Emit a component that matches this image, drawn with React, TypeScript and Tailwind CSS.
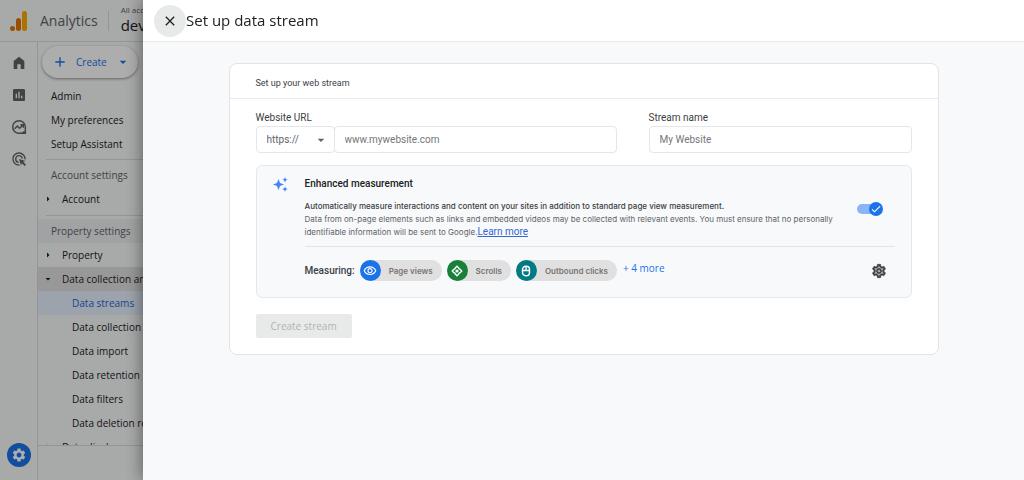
import React from "react"
import {
  MdAdd,
  MdArrowDropDown,
  MdArrowRight,
  MdAssessment,
  MdAdsClick,
  MdCheck,
  MdClose,
  MdOutlineSettings,
  MdSettings,
  MdOutlineVisibility,
} from "react-icons/md"

const HomeIcon: React.FC = () => (
  <svg viewBox="0 0 24 24" className="size-4" fill="currentColor">
    <path d="M4 21V9l8-6.500L20 9v12h-5.500v-7h-5v7z" />
  </svg>
)

const ExploreIcon: React.FC = () => (
  <svg viewBox="0 0 24 24" className="size-4" fill="none" stroke="currentColor" strokeWidth="2.2">
    <path d="M12 21.5a9.5 9.5 0 1 1 9.5-9.5v9.5z" />
    <path d="M19 19.5h2v2h-4z" fill="currentColor" />
    <path d="M5.500 14.500l4-4 3.500 3.500 5-5M14 8.500h4.500v4.500" />
  </svg>
)

const LogoIcon: React.FC = () => (
  <svg viewBox="0 0 18 20" className="h-5 w-[18px]">
    <rect x="12" y="0" width="5" height="20" rx="2.500" fill="#f9ab00" />
    <rect x="6" y="7" width="5" height="13" rx="2.500" fill="#e37400" />
    <circle cx="2.500" cy="17.500" r="2.500" fill="#e37400" />
  </svg>
)

const SparkIcon: React.FC = () => (
  <svg viewBox="0 0 15 15" className="size-[15px]" fill="#4285f4">
    <path d="M5.500 2 7 6 11 7.500 7 9 5.500 13 4 9 0 7.500 4 6z" />
    <path d="M12 0l.8 1.900 1.900.8-1.900.8L12 5.400l-.8-1.900-1.900-.8 1.900-.8z" />
    <path d="M12 9.400l.8 1.900 1.900.8-1.900.8-.8 1.900-.8-1.900-1.900-.8 1.900-.8z" />
  </svg>
)

const ScrollIcon: React.FC = () => (
  <svg viewBox="0 0 24 24" className="size-3" fill="none" stroke="currentColor" strokeWidth="2.800">
    <path d="M8 6.500 12 2.500 16 6.500M8 17.500l4 4 4-4M6.500 8 2.500 12 6.500 16M17.500 8l4 4-4 4" />
    <path d="M6.500 9 9 6.500M15 6.500 17.500 9M17.500 15 15 17.500M9 17.500 6.500 15" />
    <circle cx="12" cy="12" r="3.200" fill="currentColor" stroke="none" />
  </svg>
)

const MouseIcon: React.FC = () => (
  <svg viewBox="0 0 24 24" className="size-3" fill="none" stroke="currentColor" strokeWidth="2.800">
    <rect x="5" y="2.500" width="14" height="19" rx="6.500" />
    <path d="M5 11h14M12 3v8" />
  </svg>
)

const chips = [
  { label: "Page views", color: "bg-[#1a73e8]", icon: <MdOutlineVisibility className="size-3.5" /> },
  { label: "Scrolls", color: "bg-[#188038]", icon: <ScrollIcon /> },
  { label: "Outbound clicks", color: "bg-[#007b83]", icon: <MouseIcon /> },
]

const subItems = ["Data collection", "Data import", "Data retention", "Data filters", "Data deletion requests"]

const row = "flex h-6 items-center whitespace-nowrap"

const Sidebar: React.FC = () => (
  <nav className="w-60 shrink-0 text-[10px] font-medium text-[#202124]">
    <div className="px-1 pt-1 pb-1.5">
      <button className="flex h-8 w-24 items-center rounded-full bg-white pl-2.5 text-[#1a73e8] shadow-[0_1px_3px_rgba(0,0,0,0.4)]">
        <MdAdd className="size-4" />
        <span className="ml-2">Create</span>
        <MdArrowDropDown className="ml-2 size-4" />
      </button>
    </div>
    <div className="h-[362px] overflow-hidden border-b border-[#dadce0]">
      <a href="#admin" className={`${row} pl-[13px]`}>Admin</a>
      <a href="#preferences" className={`${row} pl-[13px]`}>My preferences</a>
      <a href="#assistant" className={`${row} pl-[13px]`}>Setup Assistant</a>
      <div className="mt-[3px] ml-2 border-t border-[#dadce0] pt-[3px]" />
      <div className={`${row} pl-[13px] text-[#5f6368]`}>Account settings</div>
      <button className={`${row} w-full pl-1`}>
        <MdArrowRight className="size-3" />
        <span className="ml-2">Account</span>
      </button>
      <div className="mt-1 ml-2 border-t border-[#dadce0] pt-[3px]" />
      <div className={`${row} bg-[#eeeff0] pl-[13px] text-[#5f6368]`}>Property settings</div>
      <button className={`${row} w-full pl-1`}>
        <MdArrowRight className="size-3" />
        <span className="ml-2">Property</span>
      </button>
      <button className={`${row} w-full bg-[#e0e1e2] pl-1`}>
        <MdArrowDropDown className="size-3" />
        <span className="ml-2">Data collection and modification</span>
      </button>
      <a href="#streams" className={`${row} bg-[#e8f0fe] pl-[34px] text-[#1967d2]`}>Data streams</a>
      {subItems.map((item) => (
        <a key={item} href="#data" className={`${row} pl-[34px]`}>{item}</a>
      ))}
      <button className={`${row} w-full pl-1`}>
        <MdArrowRight className="size-3" />
        <span className="ml-2">Data display</span>
      </button>
    </div>
  </nav>
)

const AdminPage: React.FC = () => (
  <div className="flex h-screen flex-col bg-[#f8f9fa]">
    <header className="flex h-[42px] shrink-0 items-center border-b border-[#dadce0] pl-2.5">
      <LogoIcon />
      <span className="ml-3 text-[14px] text-[#5f6368]">Analytics</span>
      <div className="ml-2.5 h-5 border-l border-[#dadce0]" />
      <div className="ml-3 whitespace-nowrap pb-1">
        <div className="text-[8px] leading-3 text-[#5f6368]">All accounts</div>
        <div className="text-[15px] leading-[18px] text-[#202124]">dev</div>
      </div>
    </header>
    <div className="flex min-h-0 flex-1">
      <div className="flex w-[38px] shrink-0 flex-col items-center gap-4 border-r border-[#dadce0] pt-[13px] pb-[13px] text-[#5f6368]">
        <button aria-label="Home"><HomeIcon /></button>
        <button aria-label="Reports"><MdAssessment className="size-4" /></button>
        <button aria-label="Explore"><ExploreIcon /></button>
        <button aria-label="Advertising"><MdAdsClick className="size-4" /></button>
        <button aria-label="Admin" className="mt-auto flex size-6 items-center justify-center rounded-full bg-[#1a73e8] text-white">
          <MdSettings className="size-4" />
        </button>
      </div>
      <Sidebar />
    </div>
  </div>
)

const StreamForm: React.FC = () => (
  <form className="mx-auto w-full max-w-[710px] rounded-lg border border-[#e0e3e7] bg-white">
    <h2 className="border-b border-[#e8eaed] px-[26px] pt-[11px] pb-[7px] text-[9px] leading-4 text-[#3c4043]">
      Set up your web stream
    </h2>
    <div className="px-[26px] pt-[11px] pb-4">
      <div className="flex gap-8">
        <div className="min-w-0 flex-[361]">
          <label htmlFor="url" className="block text-[10px] leading-4 text-[#3c4043]">Website URL</label>
          <div className="flex h-[27px] text-[10px] text-[#5f6368]">
            <div className="relative w-[79px] shrink-0">
              <select aria-label="Protocol" className="h-full w-full appearance-none rounded-sm border border-[#e4e6e9] bg-white px-2.5">
                <option>https://</option>
                <option>http://</option>
              </select>
              <MdArrowDropDown className="pointer-events-none absolute top-1.5 right-1.5 size-4" />
            </div>
            <input id="url" placeholder="www.mywebsite.com" className="-ml-px min-w-0 flex-1 rounded-sm border border-[#e4e6e9] px-2.5 placeholder:text-[#757575]" />
          </div>
        </div>
        <div className="min-w-0 flex-[263]">
          <label htmlFor="name" className="block text-[10px] leading-4 text-[#3c4043]">Stream name</label>
          <input id="name" placeholder="My Website" className="h-[27px] w-full rounded-sm border border-[#e4e6e9] px-2.5 text-[10px] placeholder:text-[#757575]" />
        </div>
      </div>

      {/* Enhanced measurement */}
      <div className="mt-3 flex rounded-md border border-[#e4e7eb] bg-[#f8f9fb] pt-2.5 pr-4 pb-4 pl-4">
        <div className="w-8 shrink-0 pt-px"><SparkIcon /></div>
        <div className="min-w-0 flex-1">
          <h3 className="text-[10px] leading-4 font-medium text-[#202124]">Enhanced measurement</h3>
          <div className="mt-2 flex items-start justify-between border-b border-[#e0e3e7] pb-[7px]">
            <div className="font-['Inter',sans-serif] text-[8px] leading-[13px] text-[#5f6368]">
              <p className="font-medium text-[#3c4043]">
                Automatically measure interactions and content on your sites in addition to standard page view measurement.
              </p>
              <p>
                Data from on-page elements such as links and embedded videos may be collected with relevant events. You must ensure that no personally
                <br />
                identifiable information will be sent to Google.
                <a href="#learn" className="font-[Roboto,sans-serif] text-[10px] leading-none text-[#3367d6] underline">Learn more</a>
              </p>
            </div>
            <label className="mt-0.5 mr-3 flex h-3.5 w-[26px] shrink-0 items-center rounded-full">
              <input type="checkbox" defaultChecked aria-label="Enhanced measurement" className="sr-only" />
              <span className="h-2.5 w-4 rounded-l-full bg-[#8ab4f8]" />
              <span className="-ml-1 flex size-3.5 shrink-0 items-center justify-center rounded-full bg-[#1a73e8] text-white">
                <MdCheck className="size-3" />
              </span>
            </label>
          </div>
          <div className="mt-[13px] flex items-center">
            <span className="mr-[5px] text-[10px] font-medium text-[#3c4043]">Measuring:</span>
            <ul className="flex gap-[5px]">
              {chips.map((chip) => (
                <li key={chip.label} className="flex h-[21px] items-center rounded-full bg-[#e0e0e0] pr-[9px] font-['Inter',sans-serif] text-[8px] font-semibold text-[#757575]">
                  <span className={`mr-2 flex size-[21px] items-center justify-center rounded-full text-white ${chip.color}`}>
                    {chip.icon}
                  </span>
                  {chip.label}
                </li>
              ))}
            </ul>
            <button type="button" className="ml-1.5 pb-1 font-['Open_Sans',sans-serif] text-[10px] font-medium text-[#1a73e8]">+ 4 more</button>
            <button type="button" aria-label="Measurement settings" className="mr-2 ml-auto text-[#3c4043]">
              <MdOutlineSettings className="size-4 [&>path:last-child]:stroke-1" />
            </button>
          </div>
        </div>
      </div>

      <button disabled className="mt-4 h-6 rounded-xs bg-[#e8eae9] px-[15px] font-['Open_Sans',sans-serif] text-[10px] font-medium text-[#b0b3b2]">
        Create stream
      </button>
    </div>
  </form>
)

const App: React.FC = () => {
  return (
    <div className="h-screen overflow-hidden font-['Open_Sans',sans-serif]">
      <AdminPage />
      <div className="fixed inset-0 bg-black/32" />
      <section role="dialog" aria-label="Set up data stream" className="fixed inset-y-0 right-0 left-[143px] flex flex-col bg-[#f8f9fb] shadow-[0_0_16px_rgba(0,0,0,0.5)]">
        <header className="flex h-[42px] shrink-0 items-center border-b border-[#e8eaed] bg-white pl-[11px]">
          <button aria-label="Close" className="flex size-8 items-center justify-center rounded-full bg-[#e8eae9] text-[#202124]">
            <MdClose className="size-4" />
          </button>
          <h1 className="text-[15px] font-medium text-[#202124]">Set up data stream</h1>
        </header>
        <main className="flex-1 overflow-auto px-8 pt-[21px] font-[Roboto,sans-serif]">
          <StreamForm />
        </main>
      </section>
    </div>
  )
}

export default App
